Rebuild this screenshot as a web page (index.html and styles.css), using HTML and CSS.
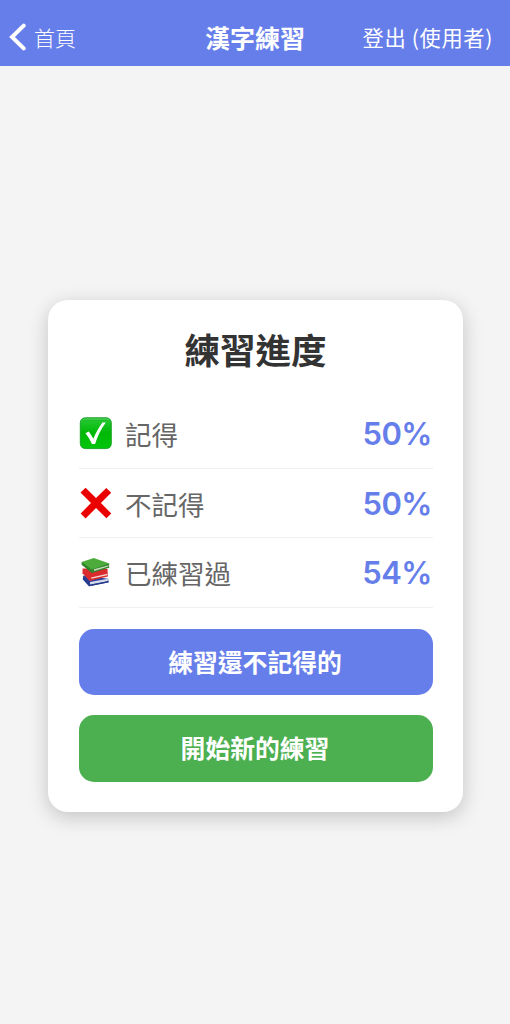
FILE: index.html
```html
<!DOCTYPE html>
<html lang="zh-Hant">
<head>
<meta charset="utf-8">
<meta name="viewport" content="width=device-width, initial-scale=1">
<title>漢字練習</title>
<link rel="stylesheet" href="styles.css">
</head>
<body>
<header class="navbar">
  <a class="back">
    <svg class="chevron" width="17" height="28" viewBox="0 0 17 28" fill="none" stroke="#fff" stroke-width="4" stroke-linecap="round"><path d="M14.7 2.6 3 14 14.7 25.4"/></svg>
    <span>首頁</span>
  </a>
  <h1 class="nav-title">漢字練習</h1>
  <a class="logout">登出 (使用者)</a>
</header>
<main class="content">
  <section class="card">
    <h2 class="card-title">練習進度</h2>
    <ul class="stats">
      <li class="stat">
        <svg class="icon" viewBox="0 0 34 34">
          <defs><linearGradient id="green" x2="0" y2="1"><stop offset="0" stop-color="#08ad18"/><stop offset=".12" stop-color="#20c62b"/><stop offset=".5" stop-color="#00b806"/><stop offset="1" stop-color="#00c70b"/></linearGradient></defs>
          <rect x="1.3" y="1.8" width="31" height="30.8" rx="5" fill="url(#green)" stroke="#139f20" stroke-width=".9"/>
          <path d="M3.5 4.2Q4.5 3 6.3 3h21q1.8 0 2.8 1.2" fill="none" stroke="#72db78" stroke-width=".9"/>
          <path d="M6.4 17.3 9.9 15.6 14.4 22.8C16.6 17 19.6 11.5 23.4 6.4H26.8C21.9 13 18.6 20 16.1 28H12.9C11.1 24 9 20.5 6.4 17.3z" fill="#fff"/>
        </svg>
        <span class="label">記得</span><span class="value">50%</span>
      </li>
      <li class="stat">
        <svg class="icon" viewBox="0 0 34 34"><path d="M6.6 1.7 17 12 27.3 1.9 32.2 6.7 21.9 17 32.3 27.5 27.4 32.3 17 22 6.6 32.4 1.6 27.5 12 17.1 1.5 6.6z" fill="#eb0000"/></svg>
        <span class="label">不記得</span><span class="value">50%</span>
      </li>
      <li class="stat">
        <svg class="icon" viewBox="0 -1 34 34">
          <path d="M4.4 19.5 3.8 23.2 10 30.2 29.5 26.4 29.2 22.8z" fill="#2c429f"/>
          <path d="M11 26 29 22.7 28.6 25.3 11.1 28.6z" fill="#d5dbe9"/>
          <path d="M10 28.9 29.6 25.1v1.2L10.3 30.3 3.8 23.2 4.4 20 10.6 26.5z" fill="#263b8c"/>
          <path d="M3.6 12.5 3.5 17.2 10.5 24.9 28.9 20.6 28.5 13z" fill="#d92b2e"/>
          <path d="M12.2 21.4 28.4 17.7 28.2 19.3 12.1 22.8z" fill="#f1d9d2"/>
          <path d="M2.6 6.1 2.6 8.8 12.8 16.9 30.2 11.7 30.1 7.4z" fill="#31832b"/>
          <path d="M15 13.2 29.6 9.2 29.3 10.6 15 14.9z" fill="#c9dcbd"/>
          <path d="M2.6 6 14.8 2 30.4 7.6 12.7 13.4z" fill="#4cac3b"/>
        </svg>
        <span class="label">已練習過</span><span class="value">54%</span>
      </li>
    </ul>
    <button class="btn btn-primary">練習還不記得的</button>
    <button class="btn btn-success">開始新的練習</button>
  </section>
</main>
</body>
</html>
```
FILE: styles.css
```css
* { box-sizing: border-box; }
body {
  margin: 0;
  height: 1024px;
  display: flex;
  flex-direction: column;
  background: #f4f4f4;
  font-family: "Noto Sans CJK TC", sans-serif;
}
.navbar {
  height: 66px;
  flex: none;
  padding: 8px 17px 0 9px;
  display: grid;
  grid-template-columns: 1fr auto 1fr;
  align-items: center;
  background: #667eea;
  color: #fff;
}
.back { display: flex; align-items: center; gap: 8px; font-size: 21px; font-weight: 300; line-height: 30px; }
.chevron { display: block; }
.nav-title { margin: 0 0 0 -8px; font-size: 25px; font-weight: 700; line-height: 36px; transform: translateX(8px); }
.logout { justify-self: end; font-size: 21.3px; line-height: 30px; letter-spacing: .6px; white-space: nowrap; }
.content { flex: 1; display: flex; align-items: flex-start; justify-content: center; padding-top: 234px; }
.card {
  width: 415px;
  height: 512px;
  margin-left: 1px;
  padding: 27px 30px 30px 31px;
  background: #fff;
  border-radius: 20px;
  box-shadow: 0 5px 20px rgba(0, 0, 0, .2);
}
.card-title { margin: 0 0 28px; padding-right: 1px; text-align: center; font-size: 35.5px; font-weight: 700; line-height: 44px; color: #333; }
.stats { list-style: none; margin: 0 0 21px; padding: 0; }
.stat { display: flex; align-items: center; height: 69.5px; border-bottom: 1px solid #f0f0f0; }
.icon { width: 34px; height: 34px; flex: none; }
.label { margin-left: 12px; padding-top: 2px; font-size: 26.5px; line-height: 40px; color: #666; }
.value { margin-left: auto; padding: 2px 1px 0 0; font: 600 31px/40px Inter, sans-serif; letter-spacing: -.5px; color: #667eea; }
.btn {
  display: block;
  width: 100%;
  height: 66.5px;
  padding: 0 2px 2px 0;
  border: 0;
  border-radius: 15px;
  color: #fff;
  font: 700 24.8px/36px "Noto Sans CJK TC", sans-serif;
}
.btn + .btn { margin-top: 20px; }
.btn-primary { background: #667eea; }
.btn-success { background: #4caf50; }
```
